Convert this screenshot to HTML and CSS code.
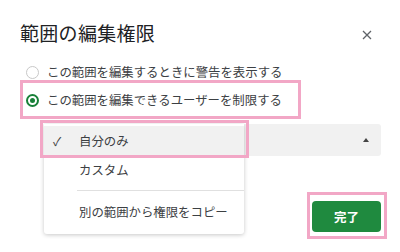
FILE: index.html
```html
<!DOCTYPE html>
<html lang="ja">
<head>
<meta charset="utf-8">
<link rel="stylesheet" href="styles.css">
</head>
<body>
<div class="dialog">
  <div class="header">
    <h1 class="title">範囲の編集権限</h1>
    <svg class="close" width="10" height="10" viewBox="0 0 10 10"><path d="M1 1L9 9M9 1L1 9" stroke="#5f6368" stroke-width="1.3"/></svg>
  </div>
  <div class="options">
    <div class="option"><span class="radio"></span><span class="label">この範囲を編集するときに警告を表示する</span></div>
    <div class="option"><span class="radio checked"></span><span class="label">この範囲を編集できるユーザーを制限する</span></div>
  </div>
  <div class="select-wrap">
    <div class="select"><span class="arrow"></span></div>
    <div class="menu">
      <div class="item active"><span class="check">✓</span><span>自分のみ</span></div>
      <div class="item"><span class="check"></span><span>カスタム</span></div>
      <div class="divider"></div>
      <div class="item"><span class="check"></span><span>別の範囲から権限をコピー</span></div>
    </div>
  </div>
  <div class="footer">
    <button class="done">完了</button>
  </div>
  <div class="mark mark-radio"></div>
  <div class="mark mark-item"></div>
  <div class="mark mark-done"></div>
</div>
</body>
</html>
```
FILE: styles.css
```css
html, body { margin: 0; padding: 0; background: #fff; }
body { width: 400px; height: 252px; overflow: hidden; font-family: "Noto Sans CJK JP", "Noto Sans", sans-serif; color: #3c4043; }
.dialog { position: relative; width: 400px; height: 252px; box-sizing: border-box; padding: 19px 19px 0 20px; }
.header { display: flex; align-items: center; justify-content: space-between; height: 28px; }
.title { margin: 0; font-size: 19px; font-weight: 400; color: #202124; line-height: 28px; letter-spacing: 0.3px; }
.close { margin-right: 9px; margin-top: 4px; }
.options { margin-top: 11px; display: flex; flex-direction: column; }
.option { display: flex; align-items: center; height: 28px; padding-left: 6px; }
.radio { width: 11px; height: 11px; border: 1px solid #c8c8c8; border-radius: 50%; box-sizing: content-box; flex: none; position: relative; }
.radio.checked { border: 2px solid #188038; width: 9px; height: 9px; }
.radio.checked::after { content: ""; position: absolute; left: 2px; top: 2px; width: 5px; height: 5px; border-radius: 50%; background: #188038; }
.label { margin-left: 8px; font-size: 12.4px; line-height: 16px; color: #3c4043; }
.select-wrap { position: relative; margin-top: 10px; margin-left: 24px; }
.select { height: 32px; width: 337px; background: #f1f1f1; border-radius: 3px; position: relative; }
.arrow { position: absolute; right: 12px; top: 14px; width: 0; height: 0; border-left: 3.5px solid transparent; border-right: 3.5px solid transparent; border-bottom: 4px solid #444; }
.menu { position: absolute; left: 0; top: 0; width: 200px; background: #fff; box-shadow: 0 1px 4px rgba(0,0,0,0.22); border-radius: 0 0 3px 3px; padding: 2px 0 8px; }
.item { display: flex; align-items: center; height: 29px; font-size: 12.4px; color: #3c4043; }
.item.active { background: #f1f1f1; }
.item + .item { margin-top: 0; }
.check { width: 35px; flex: none; text-align: left; padding-left: 9px; box-sizing: border-box; font-size: 12px; color: #444; }
.divider { height: 1px; background: #e0e0e0; margin: 6px 0 6px 33px; }
.footer { display: flex; justify-content: flex-end; margin-top: 45px; }
.done { width: 69px; height: 31px; border: none; border-radius: 4px; background: #1f8a3f; color: #fff; font-family: inherit; font-size: 12.5px; font-weight: 700; padding: 0; }
.mark { position: absolute; border: 3px solid #f2a7c6; box-sizing: border-box; pointer-events: none; }
.mark-radio { left: 20px; top: 80px; width: 281px; height: 39px; }
.mark-item { left: 40px; top: 120px; width: 209px; height: 38px; }
.mark-done { left: 307px; top: 192px; width: 80px; height: 47px; }
```
